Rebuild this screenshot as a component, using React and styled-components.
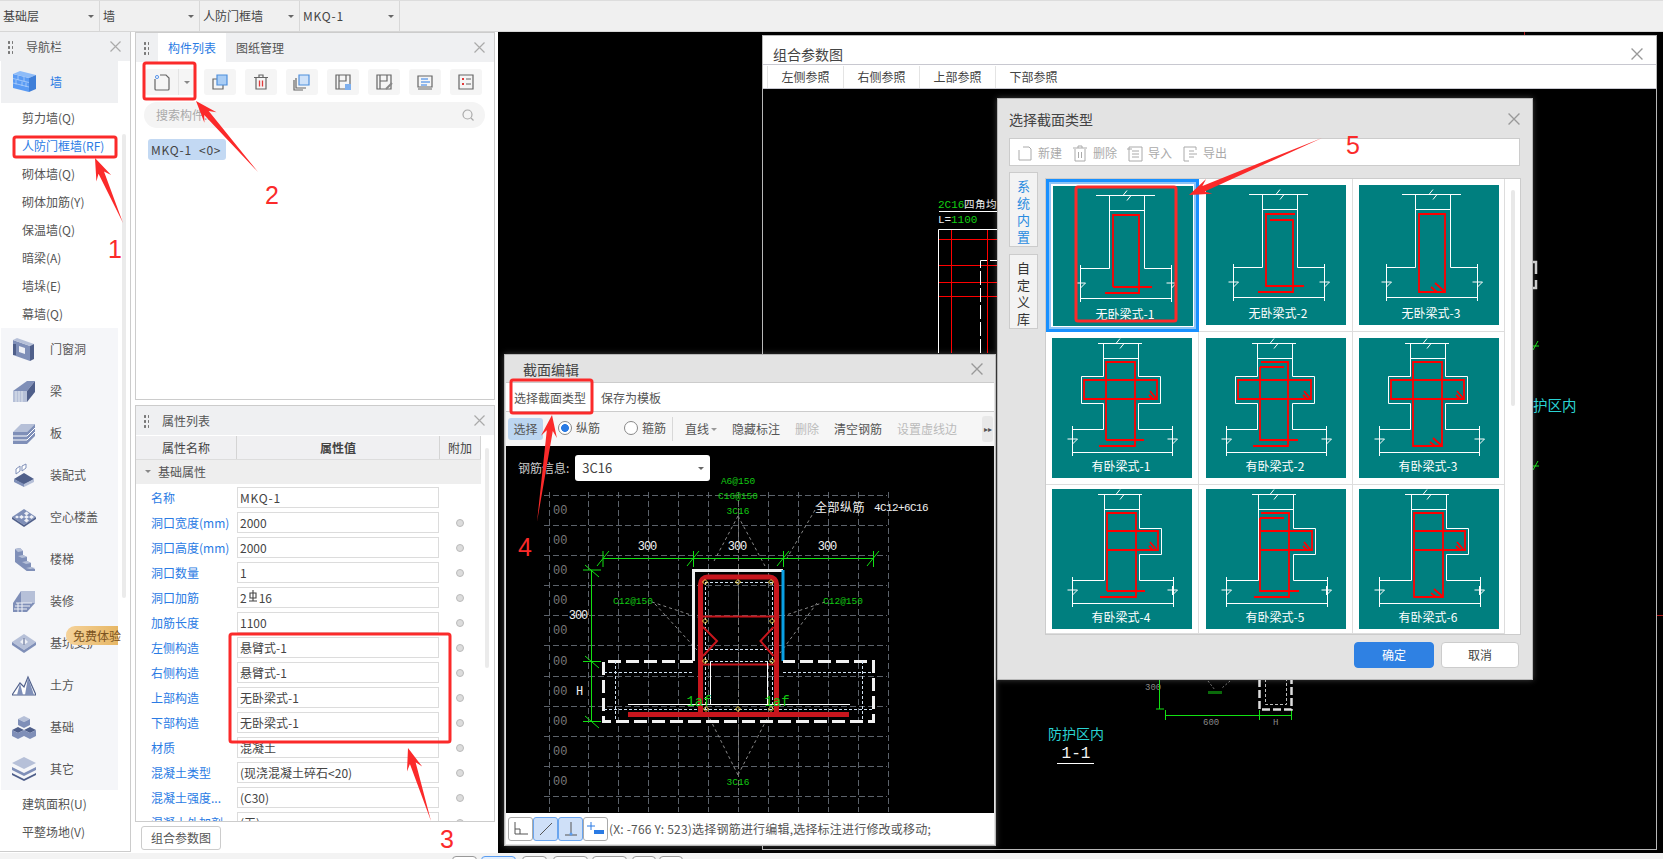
import React from "react";
import styled, { createGlobalStyle } from "styled-components";

const BLUE = "#2a7be4";
const ANNOT = "#fb2a2a";

const GlobalStyle = createGlobalStyle`
  html, body { margin: 0; padding: 0; background: #fff; }
  body { font-family: "Noto Sans CJK SC", "Liberation Sans", sans-serif; font-size: 12px; color: #444; line-height: 16px; }
  * { box-sizing: border-box; }
`;

const Screen = styled.div`
  position: relative;
  width: 1663px;
  height: 859px;
  overflow: hidden;
  display: flex;
  flex-direction: column;
  background: #fff;
`;

const Wide = styled.span`
  letter-spacing: 0.8px;
`;

/* top selector strip */
const TopBar = styled.div`
  height: 32px;
  flex: none;
  display: flex;
  background: #f0f0f0;
  border-top: 1px solid #ddd;
  border-bottom: 1px solid #d6d6d6;
`;
const TopSelect = styled.div`
  width: 100px;
  padding: 0 5px 0 3px;
  display: flex;
  align-items: center;
  justify-content: space-between;
  border-right: 1px solid #d8d8d8;
  color: #444;
`;
const Caret = styled.i`
  display: block;
  width: 0;
  height: 0;
  border-left: 3px solid transparent;
  border-right: 3px solid transparent;
  border-top: 3px solid ${(p) => p.$color || "#666"};
`;

const Workspace = styled.div`
  flex: 1;
  display: flex;
  min-height: 0;
`;

/* left navigation */
const NavPanel = styled.div`
  width: 131px;
  flex: none;
  height: 820px;
  border-right: 1px solid #ccc;
  border-bottom: 1px solid #ccc;
  display: flex;
  flex-direction: column;
`;
const PanelHeader = styled.div`
  height: 29px;
  flex: none;
  display: flex;
  align-items: center;
  background: #eff0f2;
  padding: 0 9px 0 7px;
  color: #555;
`;
const Grip = styled.i`
  display: block;
  width: 6px;
  height: 14px;
  margin-right: ${(p) => p.$gap || 13}px;
  background-image: radial-gradient(circle, #777 1.1px, transparent 1.3px);
  background-size: 4px 5px;
`;
const CloseMark = styled.svg`
  width: 11px;
  height: 11px;
  margin-left: auto;
  stroke: ${(p) => p.$color || "#aaa"};
  stroke-width: 1.2;
  fill: none;
  flex: none;
`;
const NavBody = styled.div`
  flex: 1;
  display: flex;
  padding-left: 1px;
`;
const NavColumn = styled.div`
  width: 117px;
  display: flex;
  flex-direction: column;
`;
const NavScroll = styled.div`
  width: 4px;
  height: 464px;
  margin: 73px 0 0 4px;
  background: #ebebeb;
  border-radius: 2px;
`;
const NavCategory = styled.div`
  height: 42px;
  flex: none;
  display: flex;
  align-items: center;
  padding-left: 11px;
  gap: 14px;
  background: ${(p) => (p.$active ? "#eff0f2" : "#f5f6f9")};
  color: ${(p) => (p.$active ? BLUE : "#555")};
  position: relative;
`;
const NavItem = styled.div`
  height: 28px;
  flex: none;
  padding-left: 21px;
  display: flex;
  align-items: center;
  color: ${(p) => (p.$active ? BLUE : "#555")};
`;
const NavGap = styled.div`
  height: 1px;
  flex: none;
`;
const TryBadge = styled.span`
  position: absolute;
  right: 0;
  top: 4px;
  width: 52px;
  height: 19px;
  padding-left: 7px;
  border-radius: 9px 0 0 9px;
  background: linear-gradient(90deg, #f5d29a, #e7b765);
  color: #7a5320;
  line-height: 19px;
  white-space: nowrap;
`;

/* middle column */
const MiddleColumn = styled.div`
  width: 360px;
  margin-left: 4px;
  flex: none;
  display: flex;
  flex-direction: column;
`;
const Panel = styled.div`
  height: ${(p) => p.$h}px;
  margin-bottom: ${(p) => p.$mb || 0}px;
  border: 1px solid #ccc;
  display: flex;
  flex-direction: column;
  overflow: hidden;
`;
const TabHeader = styled(PanelHeader)`
  padding: 0 9px 0 7px;
`;
const Tab = styled.div`
  width: 68px;
  height: 100%;
  display: flex;
  align-items: center;
  justify-content: center;
  background: ${(p) => (p.$active ? "#fff" : "transparent")};
  color: ${(p) => (p.$active ? BLUE : "#555")};
`;
const ToolRow = styled.div`
  display: flex;
  padding: 7px 0 0 9px;
  gap: 9px;
`;
const SplitTool = styled.div`
  width: 50px;
  height: 26px;
  display: flex;
  align-items: center;
  background: #f5f5f5;
  border-radius: 3px;
`;
const SplitMain = styled.div`
  width: 34px;
  height: 100%;
  display: flex;
  align-items: center;
  justify-content: center;
  border-right: 1px solid #e4e4e4;
`;
const SplitArrow = styled.div`
  flex: 1;
  display: flex;
  justify-content: center;
`;
const ToolButton = styled.div`
  width: 32px;
  height: 26px;
  background: #f5f5f5;
  border-radius: 3px;
  display: flex;
  align-items: center;
  justify-content: center;
`;
const SearchBox = styled.div`
  height: 26px;
  margin: 7px 9px 0 8px;
  padding: 0 11px 0 12px;
  border-radius: 13px;
  background: #f4f4f4;
  color: #aaa;
  display: flex;
  align-items: center;
  justify-content: space-between;
`;
const MemberTag = styled.div`
  align-self: flex-start;
  margin: 11px 0 0 12px;
  height: 21px;
  width: 78px;
  padding-left: 3px;
  border-radius: 3px;
  background: #c3d9f3;
  color: #444;
  display: flex;
  align-items: center;
  white-space: pre;
`;

/* property table */
const TableWrap = styled.div`
  flex: 1;
  display: flex;
  min-height: 0;
`;
const TableMain = styled.div`
  width: 345px;
  overflow: hidden;
`;
const TableScroll = styled.div`
  width: 4px;
  height: 220px;
  margin: 13px 0 0 4px;
  background: #ebebeb;
  border-radius: 2px;
`;
const TableHead = styled.div`
  height: 25px;
  display: grid;
  grid-template-columns: 101px 203px 41px;
  background: #f0f0f2;
  border-top: 1px solid #fff;
  border-bottom: 1px solid #ddd;
`;
const HeadCell = styled.div`
  display: flex;
  align-items: center;
  justify-content: center;
  border-right: 1px solid #d4d4d4;
  font-weight: ${(p) => (p.$bold ? 700 : 400)};
  color: #444;
`;
const GroupRow = styled.div`
  height: 25px;
  display: flex;
  align-items: center;
  gap: 7px;
  padding: 0 0 1px 9px;
  background: #eeeeee;
  border-bottom: 1px solid #fff;
  color: #555;
`;
const PropRow = styled.div`
  height: 25px;
  display: grid;
  grid-template-columns: 101px 202px 42px;
  align-items: center;
`;
const PropName = styled.div`
  padding-left: 15px;
  color: ${BLUE};
  white-space: nowrap;
`;
const PropValue = styled.div`
  height: 21px;
  border: 1px solid #dcdcdc;
  padding-left: 2px;
  display: flex;
  align-items: center;
  color: #444;
  white-space: nowrap;
`;
const PropDot = styled.i`
  display: block;
  justify-self: center;
  width: 8px;
  height: 8px;
  border-radius: 50%;
  background: #dcdcdc;
  border: 1px solid #bbb;
`;
const PanelFoot = styled.div`
  padding: 4px 0 0 6px;
`;
const PlainButton = styled.div`
  width: 80px;
  height: 24px;
  border: 1px solid #ccc;
  border-radius: 3px;
  display: flex;
  align-items: center;
  justify-content: center;
  color: #555;
`;

/* black drawing canvas and floating windows */
const Canvas = styled.div`
  flex: 1;
  margin-left: 3px;
  background: #000;
`;
const BottomStrip = styled.div`
  height: 6px;
  flex: none;
  display: flex;
  background: #f3f3f3;
  padding: 3px 0 0 452px;
  overflow: hidden;
`;
const StripButton = styled.div`
  width: ${(p) => p.$w}px;
  height: 20px;
  margin-right: ${(p) => p.$mr}px;
  flex: none;
  border: 1px solid ${(p) => (p.$on ? "#5b9df0" : "#999")};
  background: ${(p) => (p.$on ? "#e3effd" : "#fff")};
  border-radius: 4px;
`;
const CadTick = styled.i`
  position: absolute;
  left: ${(p) => p.$x}px;
  top: ${(p) => p.$y}px;
  width: ${(p) => p.$w}px;
  height: ${(p) => p.$h}px;
  background: #b01818;
`;
const Window = styled.div`
  position: absolute;
  left: ${(p) => p.$x}px;
  top: ${(p) => p.$y}px;
  width: ${(p) => p.$w}px;
  height: ${(p) => p.$h}px;
  display: flex;
  flex-direction: column;
  background: ${(p) => p.$bg};
  border: 1px solid #b8b8b8;
  box-shadow: ${(p) => (p.$shadow ? "0 0 6px rgba(255,255,255,0.25)" : "none")};
`;
const WindowHead = styled.div`
  height: ${(p) => p.$h}px;
  flex: none;
  display: flex;
  align-items: center;
  padding: ${(p) => p.$pt || 0}px ${(p) => p.$pr || 13}px 0 ${(p) => p.$pl || 10}px;
  font-size: 14px;
  color: #444;
`;
const ParamBar = styled.div`
  height: 25px;
  flex: none;
  display: flex;
  padding: 1px 0 0 4px;
  background: #fff;
  border-top: 1px solid #c8c8d0;
  border-bottom: 1px solid #c8c8d0;
`;
const ParamTab = styled.div`
  width: 76px;
  display: flex;
  align-items: center;
  justify-content: center;
  border-left: 1px solid #e4e4e4;
  color: #444;
`;
const CadBody = styled.div`
  flex: 1;
  background: #000;
  min-height: 0;
`;
const CadSvg = styled.svg`
  display: block;
  text {
    font-family: "Liberation Mono", monospace;
  }
`;
const CadCjk = styled.text`
  && {
    font-family: "Noto Sans CJK SC", sans-serif;
  }
`;

/* section editor window */
const EditorMenu = styled.div`
  height: 30px;
  flex: none;
  margin: 0 1px;
  display: flex;
  align-items: center;
  gap: 15px;
  padding: 2px 0 0 8px;
  background: #fff;
  border-top: 1px solid #ccc;
  border-bottom: 1px solid #ccc;
  color: #555;
`;
const EditorTools = styled.div`
  height: 34px;
  flex: none;
  margin: 0 1px;
  padding-left: 2px;
  display: flex;
  align-items: center;
  background: #f6f6f6;
  position: relative;
  color: #555;
`;
const SelectChip = styled.div`
  width: 35px;
  height: 22px;
  margin-right: 15px;
  background: #bcd6f1;
  border-radius: 3px;
  display: flex;
  align-items: center;
  justify-content: center;
`;
const RadioLabel = styled.label`
  width: ${(p) => p.$w}px;
  display: flex;
  align-items: center;
  gap: 4px;
  flex: none;
  margin-top: -3px;
`;
const RadioMark = styled.i`
  display: block;
  width: 14px;
  height: 14px;
  border-radius: 50%;
  border: 1px solid #888;
  background: ${(p) => (p.$on ? "radial-gradient(circle, #2a7be4 3.6px, #fff 4.2px)" : "#fff")};
`;
const ToolDivider = styled.i`
  display: block;
  width: 1px;
  height: 24px;
  background: #d8d8d8;
  margin: 0 12px 0 6px;
  flex: none;
`;
const ToolWord = styled.span`
  color: ${(p) => (p.$off ? "#bbb" : "#555")};
  margin-right: 15px;
  display: flex;
  align-items: center;
  gap: 2px;
  flex: none;
`;
const MoreButton = styled.div`
  position: absolute;
  right: 1px;
  top: 4px;
  width: 11px;
  height: 26px;
  background: #e8e8e8;
  border-radius: 3px;
  font-size: 8px;
  line-height: 26px;
  text-align: center;
  color: #555;
`;
const EditorCanvas = styled.div`
  flex: 1;
  margin: 0 1px;
  background: #000;
  position: relative;
  min-height: 0;
`;
const RebarField = styled.div`
  position: absolute;
  left: 12px;
  top: 9px;
  display: flex;
  align-items: center;
  gap: 6px;
  color: #ccc;
`;
const RebarSelect = styled.div`
  width: 135px;
  height: 26px;
  background: #fff;
  border-radius: 3px;
  padding: 0 6px 0 7px;
  display: flex;
  align-items: center;
  justify-content: space-between;
  font-size: 13px;
  color: #444;
`;
const EditorFoot = styled.div`
  height: 31px;
  flex: none;
  margin: 0 1px 1px;
  padding-left: 2px;
  display: flex;
  align-items: center;
  background: #fff;
`;
const SnapButton = styled.div`
  width: 25px;
  height: 24px;
  display: flex;
  align-items: center;
  justify-content: center;
  border: 1px solid ${(p) => (p.$on ? "#6aa5ee" : "#aaa")};
  background: ${(p) => (p.$on ? "#cfe0f8" : "#fff")};
  border-radius: 3px;
`;
const StatusText = styled.span`
  margin-left: 1px;
  color: #555;
  white-space: nowrap;
  letter-spacing: 0.2px;
`;

/* section type picker */
const PickerTools = styled.div`
  height: 28px;
  flex: none;
  margin: 0 12px 0 11px;
  padding-left: 7px;
  display: flex;
  align-items: center;
  gap: 10px;
  background: #fff;
  border: 1px solid #ccc;
  color: #aaa;
`;
const PickerTool = styled.div`
  display: flex;
  align-items: center;
  gap: 5px;
  padding-top: 2px;
`;
const PickerBody = styled.div`
  flex: none;
  height: 463px;
  margin: 6px 12px 0 11px;
  display: flex;
  align-items: flex-start;
`;
const LibraryTabs = styled.div`
  width: 29px;
  flex: none;
  margin-right: 7px;
  display: flex;
  flex-direction: column;
  gap: 7px;
`;
const LibraryTab = styled.div`
  height: 75px;
  padding-top: 4px;
  border: 1px solid #ccc;
  background: #f3f3f3;
  text-align: center;
  font-size: 13px;
  line-height: 17px;
  color: ${(p) => (p.$active ? "#2a8be0" : "#333")};
`;
const ThumbFrame = styled.div`
  margin-top: 6px;
  flex: 1;
  height: 457px;
  display: flex;
  border: 1px solid #ccc;
  background: #fff;
`;
const ThumbGrid = styled.div`
  display: grid;
  grid-template-columns: 153px 154px 152px;
  grid-template-rows: 153px 153px 149px;
  overflow: hidden;
`;
const ThumbCell = styled.div`
  display: flex;
  align-items: center;
  justify-content: center;
  border-right: 1px solid #ddd;
  border-bottom: 1px solid #ddd;
  ${(p) => p.$selected && `
    border: 3px solid #1890ff;
    box-shadow: inset 0 0 0 2px #8fc4f5;
  `}
`;
const ThumbSvg = styled.svg`
  display: block;
  background: #007f7f;
  text {
    font-family: "Noto Sans CJK SC", sans-serif;
    font-size: 12px;
    fill: #fff;
    stroke: none;
    text-anchor: middle;
  }
`;
const ThumbScroll = styled.div`
  width: 15px;
  display: flex;
  justify-content: center;
`;
const ThumbThumb = styled.i`
  display: block;
  width: 4px;
  height: 216px;
  margin-top: 11px;
  border-radius: 2px;
  background: #e8e8e8;
`;
const PickerFoot = styled.div`
  flex: 1;
  display: flex;
  justify-content: flex-end;
  gap: 7px;
  padding: 7px 13px 0 0;
`;
const DialogButton = styled.div`
  width: ${(p) => p.$w}px;
  height: 26px;
  border-radius: 4px;
  display: flex;
  align-items: center;
  justify-content: center;
  background: ${(p) => (p.$primary ? "#2f81e3" : "#fff")};
  border: 1px solid ${(p) => (p.$primary ? "#2f81e3" : "#ccc")};
  color: ${(p) => (p.$primary ? "#fff" : "#444")};
`;

/* red tutorial marks over the whole screenshot */
const AnnotationLayer = styled.svg`
  position: absolute;
  left: 0;
  top: 0;
  pointer-events: none;
  text {
    font-family: "Liberation Sans", sans-serif;
    font-size: 25px;
    fill: ${ANNOT};
    text-anchor: middle;
  }
`;

const Close = ({ color, size = 11 }) => (
  <CloseMark viewBox="0 0 11 11" $color={color} style={{ width: size, height: size }}>
    <path d="M.5.5l10 10M10.5.5l-10 10" />
  </CloseMark>
);

/* nav category pictures */
const NavIcon = ({ kind }) => {
  const a = "#7f8fb8", b = "#4f5f8a", c = "#b6c0d8";
  const wrap = (children) => <svg width="24" height="24" viewBox="0 0 24 24" style={{ flex: "none" }}>{children}</svg>;
  switch (kind) {
    case "wall":
      return wrap(<g>
        <path d="M1 4l16 4v14L1 18z" fill="#5a9bf4" /><path d="M1 4l7-3 16 4-7 3z" fill="#8ebcf8" /><path d="M17 8l7-3v14l-7 3z" fill="#3f7fd8" />
        <path d="M1 8.5l16 4M1 13l16 4M6 5.500v4.500M12 7v4.500M4 10v4.500M10 11.500v4.500M14 12.500v4.500" stroke="#bcd7fb" strokeWidth=".7" fill="none" />
      </g>);
    case "door":
      return wrap(<g>
        <path d="M1 3l17 6v15L1 18z" fill={a} /><path d="M1 3l4-2 17 6-4 2z" fill={c} /><path d="M18 9l4-2v15l-4 2z" fill={b} />
        <path d="M7 9l6 2v6l-6-2z" fill="#eef0f6" /><path d="M1 7h3v11H1z" fill={b} />
      </g>);
    case "beam":
      return wrap(<g>
        <path d="M1 12l14 0v11H1z" fill={c} /><path d="M1 12L15 2h8L15 12z" fill={a} /><path d="M15 12l8-10v11l-8 10z" fill={b} />
        <path d="M4 12v11M7 12v11M10 12v11" stroke="#fff" strokeWidth=".6" />
      </g>);
    case "slab":
      return wrap(<g>
        <path d="M1 11L9 3h14l-8 8z" fill={c} /><path d="M1 11h14v12H1z" fill={a} /><path d="M15 11l8-8v12l-8 8z" fill={a} />
        <path d="M1 15h14l8-8M1 19h14l8-8" stroke="#fff" strokeWidth="1" fill="none" />
      </g>);
    case "precast":
      return wrap(<g>
        <path d="M2 16l10-6 10 6-10 6z" fill={b} /><path d="M2 16v3l10 5v-3z" fill={a} /><path d="M22 16v3l-10 5v-3z" fill={c} />
        <path d="M4 6l4-3v5l-4 3zM10 3l4-2v4l-4 3z" fill="#fff" stroke={a} strokeWidth="1" />
      </g>);
    case "hollow":
      return wrap(<g>
        <path d="M0 12L12 4l12 8-12 8z" fill={a} />
        <path d="M7 12l2.500-2 2.500 2-2.500 2zM12 8.500l2.500-2 2.500 2-2.500 2zM12 15.500l2.500-2 2.500 2-2.500 2zM17 12l2.500-2 2.500 2-2.500 2zM3 12l2-1.500 2 1.500-2 1.500zM12 12l2.500-2 2.500 2-2.500 2z" fill="#eef0f6" />
        <path d="M0 12v2l12 8v-2zM24 12v2l-12 8v-2z" fill={b} />
      </g>);
    case "stair":
      return wrap(<g>
        <path d="M3 2l5-1 3 3v4l4 2v4l4 2v4l4 2v2l-7 1L3 15z" fill={a} />
        <path d="M3 2l5-1 3 3-5 1zM11 8l4 2-5 1-4-2zM15 14l4 2-5 1-4-2zM19 20l4 1-5 1-4-1z" fill={c} />
      </g>);
    case "finish":
      return wrap(<g>
        <path d="M1 14L9 2h14v12L15 23H1z" fill={a} /><path d="M9 2h14v12H9z" fill={c} />
        <path d="M4 14h16M3 17h15M2 20h13M6 14v9M10 14v9" stroke="#eef0f6" strokeWidth="1" />
      </g>);
    case "pit":
      return wrap(<g>
        <path d="M0 11L12 3l12 8-12 8z" fill={c} /><path d="M0 11v3l12 8v-3zM24 11v3l-12 8v-3z" fill={a} />
        <path d="M8 11l4-4 4 4-4 3z" fill="#eef0f6" /><path d="M12 7v7" stroke={b} />
      </g>);
    case "earth":
      return wrap(<g>
        <path d="M0 22L8 10l4 4 4-10 8 18z" fill="#fff" stroke={b} strokeWidth="1.200" />
        <path d="M8 10l-3 12h6zM16 4l-3 18h9z" fill={a} />
      </g>);
    case "base":
      return wrap(<g>
        <path d="M12 1l6 3-6 3-6-3z" fill={c} /><path d="M6 4v6l6 3V7zM18 4v6l-6 3V7z" fill={a} />
        <path d="M6 12l6 3-6 3-6-3zM18 12l6 3-6 3-6-3z" fill={b} /><path d="M0 15v6l6 3v-6zM12 15v6l-6 3v-6zM12 15v6l6 3v-6zM24 15v6l-6 3v-6z" fill={a} />
      </g>);
    default:
      return wrap(<g>
        <path d="M12 0l12 6-12 6L0 6z" fill={c} /><path d="M0 10l12 6 12-6v3l-12 6-12-6z" fill={a} /><path d="M0 16l12 6 12-6v2l-12 6-12-6z" fill={b} />
      </g>);
  }
};

/* component toolbar pictures */
const stroke = { fill: "none", stroke: "#666", strokeWidth: 1.2 };
const ToolIcon = ({ kind }) => {
  const frame = <path d="M2 2h14v14H2z" {...stroke} />;
  const bits = {
    create: <g><path d="M2 6v10a1 1 0 001 1h12a1 1 0 001-1V5l-3-3H7" {...stroke} /><path d="M2 2h4v4H2z" fill="#6b9fe8" /><path d="M2 2l4 4M6 2l-4 4" stroke="#fff" strokeWidth=".7" /></g>,
    copy: <g><path d="M2 6h10v10H2z" {...stroke} /><path d="M6 2h10v10H6z" fill="#a9cdf5" stroke="#4f8fdc" strokeWidth="1.200" /></g>,
    remove: <g><path d="M4 5v11h10V5M2 4.500h14M7 4V2h4v2" {...stroke} /><path d="M7.500 7.500v6M10.500 7.500v6" stroke="#e23a3a" strokeWidth="1.300" /></g>,
    batch: <g><path d="M1 7v10h9M3 5v10h10" {...stroke} /><path d="M6 2h10v10H6z" fill="#cfe2f9" stroke="#4f8fdc" strokeWidth="1.200" /></g>,
    save: <g>{frame}<path d="M5 2v14M5 8h7V2" {...stroke} /><path d="M11 11h6v6h-6z" fill="#7fb0ee" /></g>,
    edit: <g>{frame}<path d="M5 2v14M5 8h7V2" {...stroke} /><path d="M11 16l6-6" stroke="#888" strokeWidth="2" /></g>,
    list: <g><path d="M2 3h14v11H2zM2 16h14" {...stroke} /><path d="M5 6h7M5 9h9M5 12h6" stroke={BLUE} strokeWidth="1" /></g>,
    check: <g><path d="M2 2h14v14H2z" {...stroke} /><path d="M5 5l2 2M7 5l-2 2M5 10l2 2M7 10l-2 2" stroke="#e23a3a" /><path d="M9 6h5M9 11h5" stroke="#666" /></g>,
  };
  return <svg width="18" height="18" viewBox="0 0 18 18">{bits[kind]}</svg>;
};

const RebarMark = () => (
  <svg width="10" height="12" viewBox="0 0 10 12" style={{ margin: "-3px 1px 0" }}>
    <path d="M2 3h6v5H2zM5 0v11M1 11h8" fill="none" stroke="#444" strokeWidth="1.100" />
  </svg>
);

/* thumbnail drawings: white outline + red bars for each section shape */
const OUTLINES = {
  plain: "M43 9.500H102M56.500 9.500V82.500H27M91.500 9.500V82.500H118M56.500 24.500H91.500M27.500 79V116M118.500 79V116M27 112.500H119",
  cross: "M46 5.500H90M51.500 5.500V38.500H29.500V65.500H51.500V91.500H20M86.500 5.500V38.500H108.500V65.500H86.500V91.500H120M51.500 20.500H86.500M20.500 88V118M120.500 88V118M20 114.500H121",
  tee: "M46 5.500H90M52.500 5.500V91.500H20M87.500 5.500V39.500H109.500V65.500H87.500V91.500H121M52.500 20.500H87.500M20.500 88V118M121.500 88V118M20 114.500H122",
};
const BARS = {
  plain: {
    open: "M60 101H99M60 101V29H86V107H52", lap: "M59 29H89M64 35H87V107H52M60 29V101H98",
    hook: "M60 29H86V107H60ZM76 98l9 8M72 102l6 5",
  },
  cross: {
    wing: "M32 42H105V61H32ZM98 53l6 7M97 57l4 4",
    open: "M54 102H92M54 102V24H83V108H47", lap: "M55 24H82V108H47M54 29H78M54 29V102H92",
    hook: "M54 24H83V108H54ZM74 100l8 7M71 104l5 4",
  },
  tee: {
    wing: "M55 42H106V61H55M98 53l6 7M97 57l4 4M106 42V61",
    open: "M55 102H93M55 102V24H84V108H48", lap: "M55 24H83V108H48M54 29H78M54 29V102H93",
    hook: "M55 24H84V108H55ZM75 100l8 7M72 104l5 4",
  },
};
const breakMarks = (shape) => {
  const [t, l, r, y, top] = shape === "plain" ? [74, 27.5, 118.5, 98, 9.5] : [68, 20.5, 120.5, 102, 5.5];
  const foot = (x) => `M${x - 5} ${y - 1}H${x + 5}L${x} ${y + 4}L${x} ${y - 5}`;
  return `M${t} ${top - 5}L${t - 4} ${top}H${t + 4}L${t} ${top + 5}${foot(l)}${foot(r)}`;
};
const SectionThumb = ({ shape, bars, name }) => (
  <ThumbSvg width="140" height="140" viewBox="0 0 140 140">
    <path d={OUTLINES[shape]} fill="none" stroke="#fff" strokeWidth="1" />
    <path d={breakMarks(shape)} fill="none" stroke="#fff" strokeWidth="1" />
    <path d={BARS[shape][bars]} fill="none" stroke="#f00" strokeWidth="1.800" />
    {BARS[shape].wing && <path d={BARS[shape].wing} fill="none" stroke="#f00" strokeWidth="1.800" />}
    <text x={shape === "plain" ? 72 : 69} y="133">{name}</text>
  </ThumbSvg>
);

const GRID_X = [549.5, 588.5, 618.5, 648.5, 678.5, 708.5, 738.5, 768.5, 798.5, 828.5, 858.5, 888.5];
const GRID_Y = [495.5, 525.5, 555.5, 585.5, 615.5, 645.5, 676.5, 706.5, 736.5, 766.5, 796.5];
const LABEL_Y = [510, 540, 570, 600, 630, 661, 691, 721, 751, 781];
const NODES = [[705, 582], [738, 582], [771, 582], [705, 621], [772, 621], [705, 661], [772, 661], [706, 709], [738, 709], [771, 709]];

/* the rebar section drawing in the section editor */
const SectionDrawing = () => (
  <CadSvg width="487" height="368" viewBox="506 446 487 368">
    <g stroke="#5c626a" strokeWidth="1" strokeDasharray="6 3" fill="none">
      {GRID_X.map((x) => <path key={x} d={`M${x} 492V812`} />)}
      {GRID_Y.map((y) => <path key={y} d={`M544 ${y}H887`} />)}
    </g>
    {LABEL_Y.map((y) => <text key={y} x="553" y={y + 4} fontSize="12" fill="#7b7b7b">00</text>)}
    <path d="M738 516L713 563M738 516L765 566M815 510L787 558M738 775L707 713M738 775L770 713M652 602L700 618M655 604L697 650M825 602L777 618M817 603L780 653"
      stroke="#888" strokeWidth="1" strokeDasharray="3 3" fill="none" />
    {/* dimension lines */}
    <path d="M603 558.500H874M591.500 570V721M583 570H601M583 661.500H601M583 721.500H601" stroke="#12e012" strokeWidth="1" fill="none" />
    <path d="M597 566l12-15M687 566l12-15M777 566l12-15M867 566l12-15M603 551v16M693.500 551v16M783.500 551v16M873.500 551v16M585 565l14 12M585 656l14 12M585 716l14 12"
      stroke="#12e012" strokeWidth="1" fill="none" />
    <path d="M693.500 661V570.500H783" stroke="#eee" strokeWidth="3" fill="none" />
    <path d="M783 570V661" stroke="#0aa0e4" strokeWidth="3" />
    <path d="M693 661.500H603.500V721.500H873.500V661.500H783" stroke="#f2f2f2" strokeWidth="3" strokeDasharray="13 5" fill="none" />
    <path d="M615.500 661V721M862.500 661V721M604 672.500H693M783 672.500H873M604 709.500H873M705.500 582V709M772.500 582V709M705 582.500H772M705 649.500H772M705 661.500H772"
      stroke="#cfe0f0" strokeWidth="1" strokeDasharray="3 2" fill="none" />
    <path d="M738.500 500V790" stroke="#777" strokeWidth="1" strokeDasharray="5 3" />
    {/* rebar */}
    <path d="M700.500 714V584a7 7 0 017-7h62a7 7 0 017 7V714" stroke="#c8161d" strokeWidth="5" fill="none" />
    <path d="M628 714.500H849" stroke="#c8161d" strokeWidth="5" />
    <path d="M703 616.500H775M703 664.500H775M703 627L717 641L703 656M773.500 627L760.500 641L773.500 656" stroke="#c8161d" strokeWidth="2" fill="none" />
    <path d="M710.500 662V704M767.500 662V704M628 704.500H850" stroke="#fff" strokeWidth="1" fill="none" />
    {NODES.map(([x, y]) => <path key={`${x}-${y}`} d={`M${x} ${y - 2.5}l2.500 2.500-2.500 2.500-2.500-2.500z`} fill="none" stroke="#f2d44a" strokeWidth="1" />)}
    <g fill="#12c812" fontSize="9.500" textAnchor="middle">
      <text x="738" y="484">A6@150</text>
      <text x="738" y="499">C16@150</text>
      <text x="738" y="514">3C16</text>
      <text x="633" y="604">C12@150</text>
      <text x="843" y="604">C12@150</text>
      <text x="738" y="785">3C16</text>
    </g>
    <g fill="#12c812" fontSize="14" textAnchor="middle">
      <text x="699" y="706">1af</text>
      <text x="777" y="706">1af</text>
    </g>
    <g fill="#f0f0f0" fontSize="12" textAnchor="middle" letterSpacing="-1">
      <text x="647" y="550">300</text>
      <text x="737" y="550">300</text>
      <text x="827" y="550">300</text>
      <text x="578" y="619">300</text>
      <text x="579" y="695">H</text>
    </g>
    <text x="874" y="511" fontSize="11" fill="#f0f0f0" letterSpacing="-0.6">4C12+6C16</text>
    <CadCjk x="815" y="512" fontSize="12" fill="#f0f0f0" letterSpacing="0.500">全部纵筋</CadCjk>
  </CadSvg>
);

/* what can be seen of the big combined drawing behind the dialogs */
const CombinedDrawing = () => (
  <CadSvg width="892" height="758" viewBox="763 90 892 758">
    <text x="938" y="209" fontSize="11" fill="#12d012">2C16</text>
    <CadCjk x="964" y="209" fontSize="10.500" fill="#eee" letterSpacing="0.500">四角均</CadCjk>
    <path d="M939 212.500H997" stroke="#fff" />
    <text x="938" y="224" fontSize="11" fill="#eee">L=</text>
    <text x="951" y="224" fontSize="11" fill="#12d012">1100</text>
    <path d="M938.500 354V230.500H1000" stroke="#fff" fill="none" />
    <path d="M951.500 231V354M987.500 231V354M939 240.500H1000M939 266.500H1000M939 283.500H1000M939 297.500H1000" stroke="#f00" fill="none" />
    <path d="M980.500 354V261.500H1000" stroke="#fff" fill="none" strokeDasharray="14 3" />
    <path d="M1533 263h3v12M1536 281v8h-3" stroke="#ccc" strokeWidth="2.500" fill="none" />
    <path d="M1533 347h6M1538 342l-5 9M1533 467h6M1538 462l-5 9" stroke="#12e012" fill="none" />
    <CadCjk x="1533" y="412" fontSize="14.500" fill="#2ad3d3">护区内</CadCjk>
    <text x="1145" y="691" fontSize="9" fill="#888">300</text>
    <text x="1203" y="726" fontSize="9" fill="#888">600</text>
    <text x="1273" y="726" fontSize="9" fill="#888">H</text>
    <path d="M1159.500 680V710M1156 710h8M1165 716.500H1291M1165.500 711v10M1259.500 711v10M1291.500 711v10" stroke="#12e012" fill="none" />
    <path d="M1259.500 680V710.500H1291.500V680" stroke="#ddd" strokeWidth="2.500" strokeDasharray="8 3" fill="none" />
    <path d="M1265.500 680V705.500H1286.500V680" stroke="#bbb" strokeDasharray="3 2" fill="none" />
    <path d="M1208 682l7 9M1230 682l-8 7" stroke="#777" strokeDasharray="2 2" />
    <path d="M1208 693.500h14" stroke="#0a6a0a" strokeWidth="3" />
    <CadCjk x="1048" y="740" fontSize="14" fill="#2ad3d3">防护区内</CadCjk>
    <text x="1076" y="759" fontSize="16" fill="#f5f5f5" textAnchor="middle">1-1</text>
    <path d="M1057 764.500H1094" stroke="#fff" />
  </CadSvg>
);

const arrowPoints = ([tx, ty], [hx, hy], len = 22, half = 8, neck = 3) => {
  const d = Math.hypot(hx - tx, hy - ty);
  const ux = (hx - tx) / d, uy = (hy - ty) / d;
  const nx = -uy, ny = ux;
  const at = (back, side) => `${(hx - ux * back + nx * side).toFixed(1)},${(hy - uy * back + ny * side).toFixed(1)}`;
  return [`${tx},${ty}`, at(len * 0.72, neck), at(len, half), `${hx},${hy}`, at(len, -half), at(len * 0.72, -neck)].join(" ");
};

const ANNOT_BOXES = [
  [14, 137, 102, 20],
  [144, 63, 51, 36],
  [230, 634, 220, 108],
  [511, 380, 81, 33],
  [1076, 187, 100, 134],
];
const ANNOT_ARROWS = [
  [[123, 223], [95, 158]],
  [[258, 172], [196, 101]],
  [[431, 821], [408, 748]],
  [[537, 522], [552, 415]],
  [[1322, 138], [1189, 195]],
];
const ANNOT_NUMBERS = [[115, 258, 1], [272, 204, 2], [447, 848, 3], [525, 556, 4], [1353, 154, 5]];

const Annotations = () => (
  <AnnotationLayer width="1663" height="859" viewBox="0 0 1663 859">
    {ANNOT_BOXES.map(([x, y, w, h]) => (
      <rect key={x} x={x} y={y} width={w} height={h} rx="2" fill="none" stroke={ANNOT} strokeWidth="3" />
    ))}
    {ANNOT_ARROWS.map(([tail, tip]) => <polygon key={tip[0]} points={arrowPoints(tail, tip)} fill={ANNOT} />)}
    {ANNOT_NUMBERS.map(([x, y, n]) => <text key={n} x={x} y={y}>{n}</text>)}
  </AnnotationLayer>
);

const wallItems = ["剪力墙(Q)", "人防门框墙(RF)", "砌体墙(Q)", "砌体加筋(Y)", "保温墙(Q)", "暗梁(A)", "墙垛(E)", "幕墙(Q)"];
const categories = [
  ["door", "门窗洞"], ["beam", "梁"], ["slab", "板"], ["precast", "装配式"], ["hollow", "空心楼盖"], ["stair", "楼梯"],
  ["finish", "装修"], ["pit", "基坑支护"], ["earth", "土方"], ["base", "基础"], ["other", "其它"],
];
const tools = ["copy", "remove", "batch", "save", "edit", "list", "check"];
const props = [
  ["名称", <Wide key="n">MKQ-1</Wide>, true], ["洞口宽度(mm)", "2000"], ["洞口高度(mm)", "2000"], ["洞口数量", "1"],
  ["洞口加筋", <React.Fragment key="r">2<RebarMark />16</React.Fragment>], ["加筋长度", "1100"],
  ["左侧构造", "悬臂式-1"], ["右侧构造", "悬臂式-1"], ["上部构造", "无卧梁式-1"], ["下部构造", "无卧梁式-1"],
  ["材质", "混凝土"], ["混凝土类型", "(现浇混凝土碎石<20)"], ["混凝土强度...", "(C30)"], ["混凝土外加剂", "(无)"],
];
const sections = [
  ["无卧梁式-1", "plain", "open"], ["无卧梁式-2", "plain", "lap"], ["无卧梁式-3", "plain", "hook"],
  ["有卧梁式-1", "cross", "open"], ["有卧梁式-2", "cross", "lap"], ["有卧梁式-3", "cross", "hook"],
  ["有卧梁式-4", "tee", "open"], ["有卧梁式-5", "tee", "lap"], ["有卧梁式-6", "tee", "hook"],
];
const strip = [[25, 4, false], [35, 6, true], [25, 6], [35, 4], [35, 5], [24, 3], [24, 0]];

const lightStroke = { fill: "none", stroke: "#aaa", strokeWidth: 1 };
const pickerTools = [
  ["新建", "M2 5v10h12V4l-2-2H6"],
  ["删除", "M3 4v12h10V4M1 3h14M6 3V1h4v2M6.500 7v6M9.500 7v6"],
  ["导入", "M2 2h13v14H2zM5 6h7M5 9h7M5 12h7M0 4h5"],
  ["导出", "M2 2h12v3M2 2v14h5M7 6h5M7 9h8M7 12h5"],
];

export default function App() {
  return (
    <Screen>
      <GlobalStyle />
      <TopBar>
        {["基础层", "墙", "人防门框墙"].map((label) => (
          <TopSelect key={label}>{label}<Caret /></TopSelect>
        ))}
        <TopSelect><Wide>MKQ-1</Wide><Caret /></TopSelect>
      </TopBar>
      <Workspace>
        <NavPanel>
          <PanelHeader>
            <Grip />导航栏<Close />
          </PanelHeader>
          <NavBody>
            <NavColumn>
              <NavCategory $active><NavIcon kind="wall" />墙</NavCategory>
              <NavGap />
              {wallItems.map((item, i) => <NavItem key={item} $active={i === 1}>{item}</NavItem>)}
              {categories.map(([kind, label]) => (
                <NavCategory key={kind}>
                  <NavIcon kind={kind} />{label}
                  {kind === "pit" && <TryBadge>免费体验</TryBadge>}
                </NavCategory>
              ))}
              <NavItem>建筑面积(U)</NavItem>
              <NavItem>平整场地(V)</NavItem>
            </NavColumn>
            <NavScroll />
          </NavBody>
        </NavPanel>
        <MiddleColumn>
          <Panel $h={368} $mb={5}>
            <TabHeader>
              <Grip $gap={9} />
              <Tab $active>构件列表</Tab>
              <Tab>图纸管理</Tab>
              <Close />
            </TabHeader>
            <ToolRow>
              <SplitTool>
                <SplitMain><ToolIcon kind="create" /></SplitMain>
                <SplitArrow><Caret $color="#888" /></SplitArrow>
              </SplitTool>
              {tools.map((kind) => <ToolButton key={kind}><ToolIcon kind={kind} /></ToolButton>)}
            </ToolRow>
            <SearchBox>
              搜索构件...
              <svg width="12" height="12" viewBox="0 0 12 12"><path d="M5.500 1a4.500 4.500 0 100 9 4.500 4.500 0 000-9zM9 9l2.500 2.500" fill="none" stroke="#aaa" strokeWidth="1.200" /></svg>
            </SearchBox>
            <MemberTag><Wide>MKQ-1  {"<0>"}</Wide></MemberTag>
          </Panel>
          <Panel $h={417}>
            <PanelHeader>
              <Grip $gap={13} />属性列表<Close />
            </PanelHeader>
            <TableWrap>
              <TableMain>
                <TableHead>
                  <HeadCell>属性名称</HeadCell>
                  <HeadCell $bold>属性值</HeadCell>
                  <HeadCell>附加</HeadCell>
                </TableHead>
                <GroupRow><Caret $color="#888" />基础属性</GroupRow>
                {props.map(([name, value, noDot]) => (
                  <PropRow key={name}>
                    <PropName>{name}</PropName>
                    <PropValue>{value}</PropValue>
                    {!noDot && <PropDot />}
                  </PropRow>
                ))}
              </TableMain>
              <TableScroll />
            </TableWrap>
          </Panel>
          <PanelFoot><PlainButton>组合参数图</PlainButton></PanelFoot>
        </MiddleColumn>
        <Canvas />
      </Workspace>
      <BottomStrip>
        {strip.map(([w, mr, on], i) => <StripButton key={i} $w={w} $mr={mr} $on={on} />)}
      </BottomStrip>

      <CadTick $x={1524} $y={32} $w={1} $h={3} />
      <CadTick $x={1656} $y={615} $w={7} $h={1} />

      <Window $x={762} $y={35} $w={895} $h={815} $bg="#fff">
        <WindowHead $h={28} $pt={8} $pl={10} $pr={13}>组合参数图<Close color="#999" size={12} /></WindowHead>
        <ParamBar>
          {["左侧参照", "右侧参照", "上部参照", "下部参照"].map((t) => <ParamTab key={t}>{t}</ParamTab>)}
        </ParamBar>
        <CadBody><CombinedDrawing /></CadBody>
      </Window>

      <Window $x={504} $y={354} $w={492} $h={492} $bg="#e3e3e3" $shadow>
        <WindowHead $h={27} $pl={18} $pr={12}>截面编辑<Close color="#999" size={12} /></WindowHead>
        <EditorMenu><span>选择截面类型</span><span>保存为模板</span></EditorMenu>
        <EditorTools>
          <SelectChip>选择</SelectChip>
          <RadioLabel $w={66}><RadioMark $on />纵筋</RadioLabel>
          <RadioLabel $w={42}><RadioMark />箍筋</RadioLabel>
          <ToolDivider />
          <ToolWord>直线<Caret $color="#999" /></ToolWord>
          <ToolWord>隐藏标注</ToolWord>
          <ToolWord $off>删除</ToolWord>
          <ToolWord>清空钢筋</ToolWord>
          <ToolWord $off>设置虚线边</ToolWord>
          <MoreButton>▸▸</MoreButton>
        </EditorTools>
        <EditorCanvas>
          <SectionDrawing />
          <RebarField>钢筋信息:<RebarSelect>3C16<Caret $color="#666" /></RebarSelect></RebarField>
        </EditorCanvas>
        <EditorFoot>
          <SnapButton>
            <svg width="16" height="16" viewBox="0 0 16 16"><path d="M2 1v12h13M2 8h5v5" fill="none" stroke="#555" /></svg>
          </SnapButton>
          <SnapButton $on>
            <svg width="16" height="16" viewBox="0 0 16 16"><path d="M2 14L14 2" fill="none" stroke="#555" /></svg>
          </SnapButton>
          <SnapButton $on>
            <svg width="16" height="16" viewBox="0 0 16 16"><path d="M8 1v12M2 14h12" fill="none" stroke="#555" /><circle cx="8" cy="13" r="1.500" fill="#5b9df0" /></svg>
          </SnapButton>
          <SnapButton>
            <svg width="18" height="16" viewBox="0 0 18 16"><path d="M4 1v8M0 5h8" stroke="#2a7be4" fill="none" /><path d="M7 9h10v4H7z" fill="#2a7be4" /></svg>
          </SnapButton>
          <StatusText>(X: -766 Y: 523)选择钢筋进行编辑,选择标注进行修改或移动;</StatusText>
        </EditorFoot>
      </Window>

      <Window $x={997} $y={98} $w={536} $h={582} $bg="#e3e3e3" $shadow>
        <WindowHead $h={39} $pl={11} $pr={12}>选择截面类型<Close color="#999" size={12} /></WindowHead>
        <PickerTools>
          {pickerTools.map(([label, d]) => (
            <PickerTool key={label}>
              <svg width="16" height="17" viewBox="0 0 16 17"><path d={d} {...lightStroke} /></svg>
              {label}
            </PickerTool>
          ))}
        </PickerTools>
        <PickerBody>
          <LibraryTabs>
            <LibraryTab $active>系<br />统<br />内<br />置</LibraryTab>
            <LibraryTab>自<br />定<br />义<br />库</LibraryTab>
          </LibraryTabs>
          <ThumbFrame>
            <ThumbGrid>
              {sections.map(([name, shape, bars], i) => (
                <ThumbCell key={name} $selected={i === 0}>
                  <SectionThumb name={name} shape={shape} bars={bars} />
                </ThumbCell>
              ))}
            </ThumbGrid>
            <ThumbScroll><ThumbThumb /></ThumbScroll>
          </ThumbFrame>
        </PickerBody>
        <PickerFoot>
          <DialogButton $primary $w={80}>确定</DialogButton>
          <DialogButton $w={78}>取消</DialogButton>
        </PickerFoot>
      </Window>

      <Annotations />
    </Screen>
  );
}
